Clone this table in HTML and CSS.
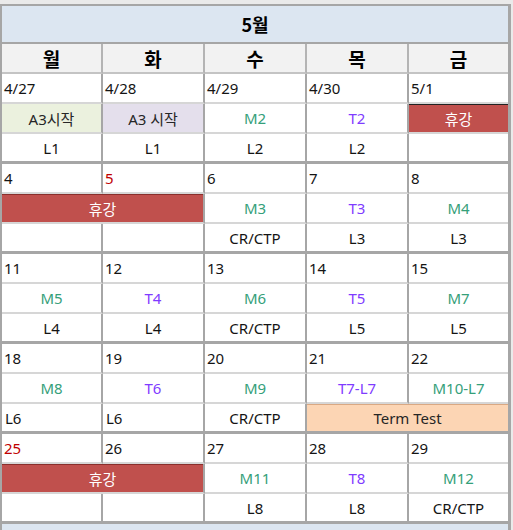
FILE: index.html
```html
<!DOCTYPE html>
<html lang="ko">
<head>
<meta charset="utf-8">
<title>5월</title>
<link rel="stylesheet" href="styles.css">
</head>
<body>
<div class="cal">
  <div class="title">5월</div>
  <div class="hd">월</div><div class="hd">화</div><div class="hd">수</div><div class="hd">목</div><div class="hd last">금</div>

  <!-- week 1 -->
  <div class="c d">4/27</div><div class="c d">4/28</div><div class="c d">4/29</div><div class="c d">4/30</div><div class="c d last">5/1</div>
  <div class="c green">A3시작</div><div class="c lav">A3 시작</div><div class="c m">M2</div><div class="c t">T2</div><div class="c last off off-dark">휴강</div>
  <div class="c e">L1</div><div class="c e">L1</div><div class="c e">L2</div><div class="c e">L2</div><div class="c e last"></div>

  <!-- week 2 -->
  <div class="c d">4</div><div class="c d red">5</div><div class="c d">6</div><div class="c d">7</div><div class="c d last">8</div>
  <div class="c span2 off">휴강</div><div class="c m">M3</div><div class="c t">T3</div><div class="c m last">M4</div>
  <div class="c e"></div><div class="c e"></div><div class="c e">CR/CTP</div><div class="c e">L3</div><div class="c e last">L3</div>

  <!-- week 3 -->
  <div class="c d">11</div><div class="c d">12</div><div class="c d">13</div><div class="c d">14</div><div class="c d last">15</div>
  <div class="c m">M5</div><div class="c t">T4</div><div class="c m">M6</div><div class="c t">T5</div><div class="c m last">M7</div>
  <div class="c e">L4</div><div class="c e">L4</div><div class="c e">CR/CTP</div><div class="c e">L5</div><div class="c e last">L5</div>

  <!-- week 4 -->
  <div class="c d">18</div><div class="c d">19</div><div class="c d">20</div><div class="c d">21</div><div class="c d last">22</div>
  <div class="c m">M8</div><div class="c t">T6</div><div class="c m">M9</div><div class="c t">T7-L7</div><div class="c m last">M10-L7</div>
  <div class="c e left">L6</div><div class="c e left">L6</div><div class="c e">CR/CTP</div><div class="c e span2 last test">Term Test</div>

  <!-- week 5 -->
  <div class="c d red">25</div><div class="c d">26</div><div class="c d">27</div><div class="c d">28</div><div class="c d last">29</div>
  <div class="c span2 off">휴강</div><div class="c m">M11</div><div class="c t">T8</div><div class="c m last">M12</div>
  <div class="c e"></div><div class="c e"></div><div class="c e">L8</div><div class="c e">L8</div><div class="c e last">CR/CTP</div>

  <div class="title next"></div>
</div>
</body>
</html>
```

FILE: styles.css
```css
html, body {
  margin: 0;
  padding: 0;
}
body {
  background: #eaeaea;
  padding-top: 4px;
  font-family: "Noto Sans", "Noto Sans CJK KR", sans-serif;
  font-size: 15px;
  color: #141414;
  overflow: hidden;
  height: 530px;
  box-sizing: border-box;
}
.cal {
  width: 511px;
  box-sizing: border-box;
  display: grid;
  grid-template-columns: 101px 102px 102px 102px 99px;
  border-top: 2px solid #a6a6a6;
  border-left: 2px solid #a6a6a6;
  border-right: 3px solid #a6a6a6;
  background: #fff;
}
.title {
  grid-column: 1 / -1;
  height: 38px;
  box-sizing: border-box;
  border-bottom: 2px solid #a6a6a6;
  background: #dce6f1;
  display: flex;
  align-items: center;
  justify-content: center;
  font-family: "Noto Sans CJK KR", "Noto Sans", sans-serif;
  font-weight: 700;
  font-size: 18px;
  color: #000;
}
.next {
  height: 10px;
  border-bottom: none;
}
.hd {
  height: 30px;
  box-sizing: border-box;
  background: #f2f2f2;
  border-right: 2px solid #b4b4b4;
  border-bottom: 2px solid #c4c4c4;
  display: flex;
  align-items: center;
  justify-content: center;
  font-family: "Noto Sans CJK KR", "Noto Sans", sans-serif;
  font-weight: 700;
  font-size: 19px;
  color: #000;
}
.c {
  height: 30px;
  box-sizing: border-box;
  border-right: 2px solid #a6a6a6;
  border-bottom: 2px solid #d6d6d6;
  display: flex;
  align-items: center;
  justify-content: center;
  white-space: nowrap;
  background: #fff;
}
.last {
  border-right: none;
}
.d {
  justify-content: flex-start;
  padding-left: 2px;
  color: #141414;
}
.red {
  color: #c00000;
}
.e {
  border-bottom: 3px solid #a6a6a6;
}
.left {
  justify-content: flex-start;
  padding-left: 3px;
}
.m {
  color: #35a07a;
}
.t {
  color: #7f3cff;
}
.green {
  background: #ebf1de;
  color: #262626;
}
.lav {
  background: #e4dfec;
  color: #262626;
}
.span2 {
  grid-column: span 2;
}
.off {
  background: #c0504d;
  color: #fff;
  box-shadow: inset 0 1px 0 #8a2f2c;
  font-family: "Noto Sans CJK KR", "Noto Sans", sans-serif;
}
.off-dark {
  box-shadow: inset 0 1px 0 #222;
}
.test {
  background: #fcd5b4;
  box-shadow: inset 0 1px 0 #d9a883;
  color: #262626;
}
```
